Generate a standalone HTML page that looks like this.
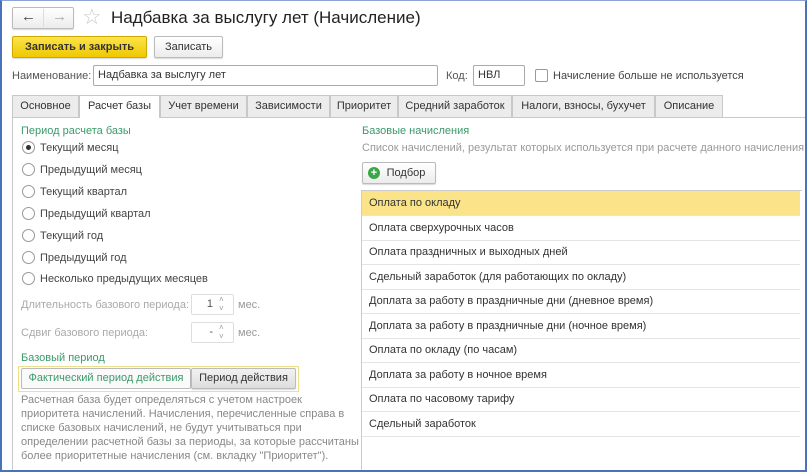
<!DOCTYPE html>
<html><head><meta charset="utf-8"><style>
*{box-sizing:border-box;margin:0;padding:0}
html,body{width:807px;height:472px;overflow:hidden}
body{background:#fff;font-family:"Liberation Sans",sans-serif;font-size:11px;color:#333;position:relative}
.frame{position:absolute;left:0;top:0;width:807px;height:472px;border:2px solid #4a72b8;border-top:1px solid #8aa4d4}
.abs{position:absolute;white-space:nowrap}
.btn{position:absolute;border:1px solid #bbb;border-radius:2px;background:linear-gradient(#fff,#ececec);text-align:center;font-size:11px;color:#333;box-shadow:0 1px 1px rgba(0,0,0,.15);white-space:nowrap}
.inp{position:absolute;border:1px solid #aaa;border-radius:2px;background:#fff;padding-left:4px;font-size:11px;line-height:19px;white-space:nowrap}
.tab{position:absolute;top:95px;height:22px;border:1px solid #c8c8c8;border-bottom:none;background:#ececec;line-height:20px;text-align:center;color:#333;white-space:nowrap}
.green{color:#3a9a6a}
.gray{color:#999}
.radio{position:absolute;left:22px;width:13px;height:13px;border:1px solid #999;border-radius:50%;background:#fff}
.rl{position:absolute;left:40px;color:#444;white-space:nowrap}
.row{position:absolute;left:362px;width:438px;height:25px;border-bottom:1px solid #e4e4e4;padding-left:7px;line-height:25px;color:#333;white-space:nowrap}
</style></head><body>
<div class="btn" style="left:12px;top:7px;width:62px;height:22px;"></div>
<div style="position:absolute;left:43px;top:9px;width:1px;height:18px;background:#ddd"></div>
<div class="abs" style="left:21px;top:8px;font-size:15px;font-weight:bold;color:#444">&#8592;</div>
<div class="abs" style="left:52px;top:8px;font-size:15px;color:#aaa">&#8594;</div>
<div class="abs" style="left:82px;top:4px;font-size:22px;color:#ccc">&#9734;</div>
<div class="abs" style="left:111px;top:8px;font-size:17px;color:#222">Надбавка за выслугу лет (Начисление)</div>
<div class="btn" style="left:12px;top:36px;width:135px;height:22px;background:linear-gradient(#fbe44a,#f0c800);border-color:#d0a800;line-height:20px;font-weight:bold;color:#333">Записать и закрыть</div>
<div class="btn" style="left:154px;top:36px;width:69px;height:22px;line-height:20px">Записать</div>
<div class="abs" style="left:12px;top:70px;color:#555">Наименование:</div>
<div class="inp" style="left:93px;top:65px;width:345px;height:21px">Надбавка за выслугу лет</div>
<div class="abs" style="left:446px;top:70px;color:#555">Код:</div>
<div class="inp" style="left:473px;top:65px;width:52px;height:21px">НВЛ</div>
<div style="position:absolute;left:535px;top:69px;width:13px;height:13px;border:1px solid #999;border-radius:2px"></div>
<div class="abs" style="left:553px;top:70px;color:#444">Начисление больше не используется</div>
<div style="position:absolute;left:12px;top:117px;width:795px;height:1px;background:#c8c8c8"></div>
<div style="position:absolute;left:12px;top:117px;width:1px;height:355px;background:#c8c8c8"></div>
<div class="tab" style="left:12px;width:67px">Основное</div>
<div class="tab" style="left:79px;width:81px;background:#fff;height:23px">Расчет базы</div>
<div class="tab" style="left:160px;width:87px">Учет времени</div>
<div class="tab" style="left:247px;width:83px">Зависимости</div>
<div class="tab" style="left:330px;width:68px">Приоритет</div>
<div class="tab" style="left:398px;width:114px">Средний заработок</div>
<div class="tab" style="left:512px;width:143px">Налоги, взносы, бухучет</div>
<div class="tab" style="left:655px;width:68px">Описание</div>
<div class="abs green" style="left:21px;top:125px">Период расчета базы</div>
<div class="radio" style="top:141px"><div style="position:absolute;left:3px;top:3px;width:5px;height:5px;border-radius:50%;background:#333"></div></div><div class="rl" style="top:142px">Текущий месяц</div>
<div class="radio" style="top:163px"></div><div class="rl" style="top:164px">Предыдущий месяц</div>
<div class="radio" style="top:185px"></div><div class="rl" style="top:186px">Текущий квартал</div>
<div class="radio" style="top:207px"></div><div class="rl" style="top:208px">Предыдущий квартал</div>
<div class="radio" style="top:229px"></div><div class="rl" style="top:230px">Текущий год</div>
<div class="radio" style="top:251px"></div><div class="rl" style="top:252px">Предыдущий год</div>
<div class="radio" style="top:272px"></div><div class="rl" style="top:273px">Несколько предыдущих месяцев</div>
<div class="abs gray" style="left:21px;top:299px;color:#aaa">Длительность базового периода:</div>
<div class="inp" style="left:191px;top:294px;width:43px;height:21px;border-color:#ddd;text-align:right;padding-right:20px;color:#555">1</div>
<div class="abs" style="left:219px;top:295px;color:#999;font-size:8px;line-height:9px">˄<br>˅</div>
<div class="abs" style="left:238px;top:299px;color:#999">мес.</div>
<div class="abs gray" style="left:21px;top:327px;color:#aaa">Сдвиг базового периода:</div>
<div class="inp" style="left:191px;top:322px;width:43px;height:21px;border-color:#ddd;text-align:right;padding-right:20px;color:#555">-</div>
<div class="abs" style="left:219px;top:323px;color:#999;font-size:8px;line-height:9px">˄<br>˅</div>
<div class="abs" style="left:238px;top:327px;color:#999">мес.</div>
<div class="abs green" style="left:21px;top:352px">Базовый период</div>
<div style="position:absolute;left:18px;top:366px;width:281px;height:26px;border:1px solid #ede08a;background:#fff"></div>
<div class="btn" style="left:21px;top:368px;width:170px;height:21px;line-height:19px;color:#3a9a6a;background:#fafafa;box-shadow:none">Фактический период действия</div>
<div class="btn" style="left:191px;top:368px;width:105px;height:21px;line-height:19px;background:linear-gradient(#f2f2f2,#ddd)">Период действия</div>
<div class="abs" style="left:21px;top:393px;color:#888;line-height:14px">Расчетная база будет определяться с учетом настроек<br>приоритета начислений. Начисления, перечисленные справа в<br>списке базовых начислений, не будут учитываться при<br>определении расчетной базы за периоды, за которые рассчитаны<br>более приоритетные начисления (см. вкладку "Приоритет").</div>
<div class="abs green" style="left:362px;top:125px">Базовые начисления</div>
<div class="abs" style="left:362px;top:142px;color:#999">Список начислений, результат которых используется при расчете данного начисления</div>
<div class="btn" style="left:362px;top:162px;width:74px;height:22px;line-height:20px;padding-left:14px">Подбор</div>
<div style="position:absolute;left:368px;top:167px;width:12px;height:12px;border-radius:50%;background:#3aa648;color:#fff;font-size:11px;line-height:12px;text-align:center;font-weight:bold">+</div>
<div style="position:absolute;left:361px;top:190px;width:1px;height:282px;background:#ccc"></div>
<div style="position:absolute;left:362px;top:190px;width:440px;height:1px;background:#ccc"></div>
<div class="row" style="top:191px;background:#fbe38a">Оплата по окладу</div>
<div class="row" style="top:216px">Оплата сверхурочных часов</div>
<div class="row" style="top:240px">Оплата праздничных и выходных дней</div>
<div class="row" style="top:265px">Сдельный заработок (для работающих по окладу)</div>
<div class="row" style="top:289px">Доплата за работу в праздничные дни (дневное время)</div>
<div class="row" style="top:314px">Доплата за работу в праздничные дни (ночное время)</div>
<div class="row" style="top:338px">Оплата по окладу (по часам)</div>
<div class="row" style="top:363px">Доплата за работу в ночное время</div>
<div class="row" style="top:387px">Оплата по часовому тарифу</div>
<div class="row" style="top:412px">Сдельный заработок</div>
<div class="frame"></div>
</body></html>
